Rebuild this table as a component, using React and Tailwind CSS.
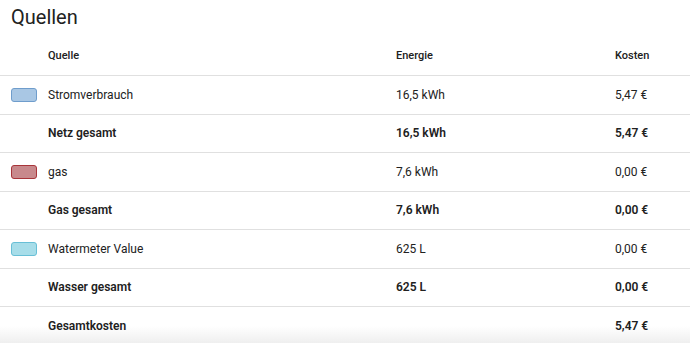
import React from "react";

const rows = [
  { swatch: "bg-[#a9c7e4] border-[#6f9dcc]", name: "Stromverbrauch", energy: "16,5 kWh", cost: "5,47 €" },
  { total: true, name: "Netz gesamt", energy: "16,5 kWh", cost: "5,47 €" },
  { swatch: "bg-[#c8898c] border-[#a8353a]", name: "gas", energy: "7,6 kWh", cost: "0,00 €" },
  { total: true, name: "Gas gesamt", energy: "7,6 kWh", cost: "0,00 €" },
  { swatch: "bg-[#a7dde9] border-[#68bfd6]", name: "Watermeter Value", energy: "625 L", cost: "0,00 €" },
  { total: true, name: "Wasser gesamt", energy: "625 L", cost: "0,00 €" },
];

const Row = ({ item, className = "" }) => (
  <div className={`flex items-center h-[38.5px] border-t border-[#e0e0e0] ${className}`}>
    <div className="w-[48px] pl-[11px] flex items-center">
      {item.swatch && (
        <div className={`w-[26px] h-[14px] rounded-[3px] border ${item.swatch}`} />
      )}
    </div>
    <div className={`w-[348px] ${item.total ? "font-semibold" : ""}`}>{item.name}</div>
    <div className={`w-[219px] ${item.total ? "font-semibold" : ""}`}>{item.energy}</div>
    <div className={item.total ? "font-semibold" : ""}>{item.cost}</div>
  </div>
);

export default function App() {
  return (
    <div className="w-[690px] h-[343px] overflow-hidden bg-white text-[#212121] font-['Roboto',sans-serif]">
      <div className="h-[37px] pl-[11px] pt-[4px] text-[20px] leading-[26px]">Quellen</div>
      <div className="flex items-center h-[38px] text-[11px] font-medium">
        <div className="w-[48px]" />
        <div className="w-[348px]">Quelle</div>
        <div className="w-[219px]">Energie</div>
        <div>Kosten</div>
      </div>
      <div className="text-[12px]">
        {rows.map((r, i) => (
          <Row key={i} item={r} />
        ))}
        <Row
          item={{ total: true, name: "Gesamtkosten", energy: "", cost: "5,47 €" }}
          className="bg-gradient-to-b from-white via-white to-[#ededed]"
        />
      </div>
    </div>
  );
}
